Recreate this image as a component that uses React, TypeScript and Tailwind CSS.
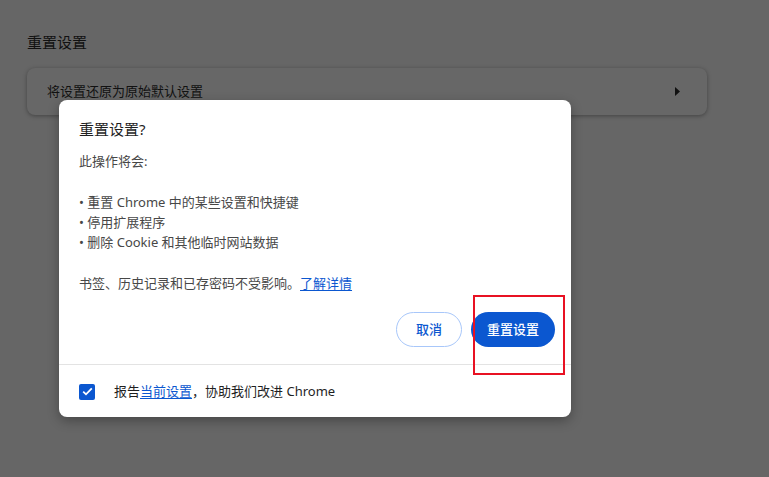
export default function App() {
  const font = { fontFamily: '"Noto Sans", "Noto Sans CJK SC", sans-serif' };
  const bullets = ["重置 Chrome 中的某些设置和快捷键", "停用扩展程序", "删除 Cookie 和其他临时网站数据"];

  return (
    <div className="relative h-[477px] w-[769px] overflow-hidden bg-[#666666]" style={font}>
      {/* page under the scrim */}
      <div className="flex flex-col px-[27px] pt-[32px]">
        <h1 className="text-[15px] leading-[20px] text-[#111111]">重置设置</h1>
        <div className="mt-[16px] flex h-[47px] w-[680px] items-center justify-between rounded-lg bg-[#676767] pl-[20px] pr-[26px] shadow-[0_1px_4px_rgba(0,0,0,0.35)]">
          <span className="text-[13px] text-[#111111]">将设置还原为原始默认设置</span>
          <svg width="6" height="9" viewBox="0 0 6 9">
            <path d="M0 0 L5 4.5 L0 9 Z" fill="#111" />
          </svg>
        </div>
      </div>

      {/* dialog */}
      <div className="absolute left-[59px] top-[100px] flex w-[512px] flex-col rounded-lg bg-white shadow-[0_4px_12px_rgba(0,0,0,0.3)]">
        <div className="flex flex-col pl-[20px] pr-[16px] pt-[19px] pb-[17px]">
          <h2 className="text-[15px] leading-[20px] text-[#1f1f1f]">重置设置?</h2>
          <div className="mt-[12px] flex flex-col text-[13px] leading-[20px] text-[#474747]">
            <p>此操作将会:</p>
            <ul className="mt-[21px] flex flex-col">
              {bullets.map((b) => (
                <li key={b}>• {b}</li>
              ))}
            </ul>
            <p className="mt-[21px]">
              书签、历史记录和已存密码不受影响。
              <a className="text-[#0b57d0] underline underline-offset-2">了解详情</a>
            </p>
          </div>
          <div className="mt-[19px] flex justify-end gap-[9px]">
            <button className="h-[35px] w-[66px] rounded-full border border-[#a8c7fa] bg-white text-[13px] font-medium text-[#0b57d0]">
              取消
            </button>
            <button className="h-[35px] w-[84px] rounded-full bg-[#0b57d0] text-[13px] font-medium text-white">
              重置设置
            </button>
          </div>
        </div>
        <div className="flex h-[53px] items-center gap-[19px] border-t border-[#e3e3e3] px-[20px] pt-[1px]">
          <span className="flex h-[16px] w-[16px] items-center justify-center rounded-[2px] bg-[#0b57d0]">
            <svg width="11" height="9" viewBox="0 0 11 9">
              <path d="M1.2 4.6 L4 7.3 L9.8 1.4" stroke="white" strokeWidth="1.8" fill="none" />
            </svg>
          </span>
          <span className="text-[13px] text-[#1f1f1f]">
            报告<a className="text-[#0b57d0] underline underline-offset-2">当前设置</a>，协助我们改进 Chrome
          </span>
        </div>
      </div>

      {/* annotation box */}
      <div className="absolute left-[473px] top-[295px] h-[80px] w-[92px] border-2 border-[#e81123]" />
    </div>
  );
}
